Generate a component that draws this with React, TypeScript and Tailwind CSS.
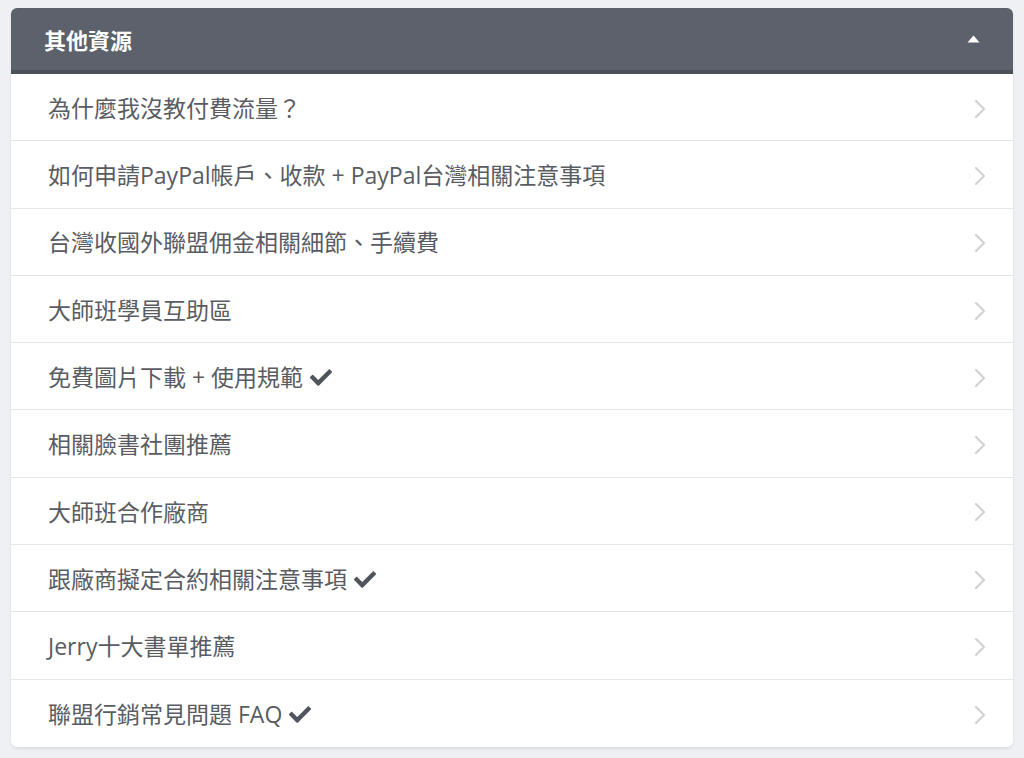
import React from "react";

const items: { text: string; check?: boolean }[] = [
  { text: "為什麼我沒教付費流量？" },
  { text: "如何申請PayPal帳戶、收款 + PayPal台灣相關注意事項" },
  { text: "台灣收國外聯盟佣金相關細節、手續費" },
  { text: "大師班學員互助區" },
  { text: "免費圖片下載 + 使用規範", check: true },
  { text: "相關臉書社團推薦" },
  { text: "大師班合作廠商" },
  { text: "跟廠商擬定合約相關注意事項", check: true },
  { text: "Jerry十大書單推薦" },
  { text: "聯盟行銷常見問題 FAQ", check: true },
];

function Check() {
  return (
    <svg width="22" height="18" viewBox="0 0 512 410" className="ml-[7px] shrink-0" fill="#50545c">
      <path d="M173.9 400.5L7.5 234.1c-10-10-10-26.2 0-36.2l36.2-36.2c10-10 26.2-10 36.2 0L192 273.8 432.1 33.7c10-10 26.2-10 36.2 0l36.2 36.2c10 10 10 26.2 0 36.2L210.1 400.5c-10 10-26.2 10-36.2 0z" />
    </svg>
  );
}

function Chevron() {
  return (
    <svg width="12" height="20" viewBox="0 0 12 20" fill="none" className="mt-[3px]">
      <polyline points="2,2 10,10 2,18" stroke="#d2d2d2" strokeWidth="2.2" strokeLinecap="round" strokeLinejoin="round" />
    </svg>
  );
}

export default function App() {
  return (
    <div
      className="min-h-[758px] w-full bg-[#eef0f4] pt-[8px] pl-[11px] pr-[11px]"
      style={{ fontFamily: '"Open Sans", "Noto Sans CJK TC", sans-serif' }}
    >
      <div className="overflow-hidden rounded-[6px] bg-white shadow-[0_2px_3px_rgba(0,0,0,0.08)]">
        <div className="flex h-[66px] items-center justify-between border-b-[4px] border-[#4b5058] bg-[#5c616b] pl-[33px] pr-[33px]">
          <span className="pt-[2px] text-[22px] font-bold text-white">其他資源</span>
          <svg width="13" height="8" viewBox="0 0 13 8">
            <polygon points="6.5,0.5 12.5,7.5 0.5,7.5" fill="#ffffff" />
          </svg>
        </div>
        {items.map((it, i) => (
          <div
            key={i}
            className={`flex h-[67.3px] items-center justify-between pl-[37px] pr-[27px] ${
              i < items.length - 1 ? "border-b border-[#e4e5e8]" : ""
            }`}
          >
            <div className="flex items-center pt-[2px] text-[23px] text-[#595c62]">
              <span>{it.text}</span>
              {it.check && <Check />}
            </div>
            <Chevron />
          </div>
        ))}
      </div>
    </div>
  );
}
